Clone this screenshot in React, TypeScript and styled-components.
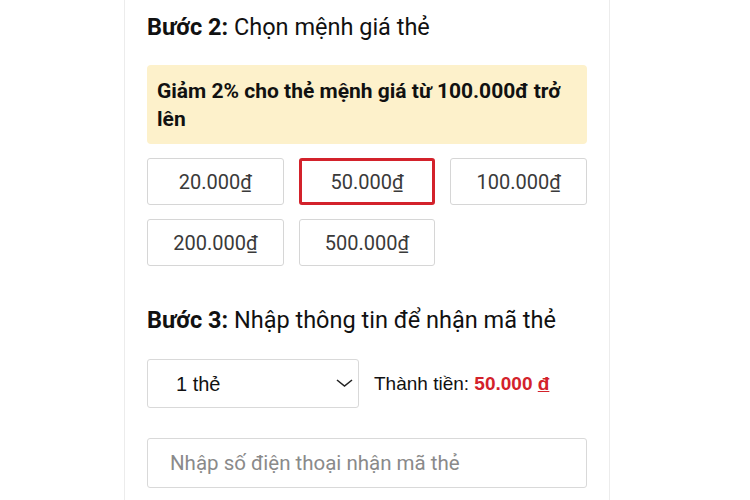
import { useState } from "react";
import styled, { createGlobalStyle } from "styled-components";

const GlobalStyle = createGlobalStyle`
  body {
    margin: 0;
    background: #fff;
    font-family: Roboto, "Liberation Sans", Arial, sans-serif;
    color: #111;
  }
`;

const Card = styled.div`
  width: 440px;
  margin-left: 124px;
  padding: 13px 22px 20px;
  border-left: 1px solid #ececec;
  border-right: 1px solid #ececec;
  min-height: 467px;
`;

const StepTitle = styled.h2<{ $top?: number }>`
  margin: ${(p) => p.$top ?? 0}px 0 0;
  font-size: 23.5px;
  line-height: 28px;
  font-weight: 400;
  color: #111;
  white-space: nowrap;
  b {
    font-weight: 700;
  }
`;

const Notice = styled.div`
  margin-top: 24px;
  padding: 12px 10px 11px;
  background: #fdf1cb;
  border-radius: 4px;
  font-size: 21px;
  line-height: 28px;
  font-weight: 700;
  color: #111;
`;

const Grid = styled.div`
  margin-top: 14px;
  display: grid;
  grid-template-columns: repeat(3, 1fr);
  gap: 14px 15px;
`;

const Price = styled.button<{ $active?: boolean }>`
  height: 47px;
  box-sizing: border-box;
  background: #fff;
  border: ${(p) => (p.$active ? "3px solid #d3222b" : "1px solid #d6d6d6")};
  border-radius: 3px;
  font-family: Roboto, "Liberation Sans", Arial, sans-serif;
  font-size: 20px;
  color: #3a3a3a;
  cursor: pointer;
  padding: 0;
  u {
    text-decoration: underline;
    text-underline-offset: 1px;
  }
`;

const Row = styled.div`
  margin-top: 25px;
  display: flex;
  align-items: center;
  gap: 15px;
`;

const SelectWrap = styled.div`
  position: relative;
  width: 212px;
  flex-shrink: 0;
`;

const Select = styled.select`
  width: 100%;
  height: 49px;
  appearance: none;
  -webkit-appearance: none;
  background: #fff;
  border: 1px solid #d9d9d9;
  border-radius: 3px;
  padding: 0 40px 0 28px;
  font-family: "Liberation Sans", Arial, sans-serif;
  font-size: 20px;
  color: #111;
  outline: none;
`;

const Chevron = styled.svg`
  position: absolute;
  right: 6px;
  top: 19px;
  pointer-events: none;
`;

const Total = styled.div`
  font-family: "Liberation Sans", Arial, sans-serif;
  font-size: 19px;
  color: #111;
  white-space: nowrap;
  span {
    color: #d3222b;
    font-weight: 700;
  }
`;

const PhoneInput = styled.input`
  display: block;
  margin-top: 30px;
  width: 100%;
  height: 50px;
  box-sizing: border-box;
  border: 1px solid #d9d9d9;
  border-radius: 3px;
  padding: 0 22px;
  font-family: Roboto, "Liberation Sans", Arial, sans-serif;
  font-size: 20.5px;
  color: #111;
  outline: none;
  &::placeholder {
    color: #8a8a8a;
  }
`;

const prices = ["20.000", "50.000", "100.000", "200.000", "500.000"];

export default function App() {
  const [selected, setSelected] = useState("50.000");
  const [qty, setQty] = useState("1");

  return (
    <>
      <GlobalStyle />
      <Card>
        <StepTitle>
          <b>Bước 2:</b> Chọn mệnh giá thẻ
        </StepTitle>
        <Notice>Giảm 2% cho thẻ mệnh giá từ 100.000đ trở lên</Notice>
        <Grid>
          {prices.map((p) => (
            <Price
              key={p}
              $active={p === selected}
              onClick={() => setSelected(p)}
            >
              {p}
              <u>₫</u>
            </Price>
          ))}
        </Grid>
        <StepTitle $top={40}>
          <b>Bước 3:</b> Nhập thông tin để nhận mã thẻ
        </StepTitle>
        <Row>
          <SelectWrap>
            <Select value={qty} onChange={(e) => setQty(e.target.value)}>
              <option value="1">1 thẻ</option>
              <option value="2">2 thẻ</option>
              <option value="3">3 thẻ</option>
            </Select>
            <Chevron width="17" height="10" viewBox="0 0 17 10">
              <path
                d="M1 2 L8.5 8 L16 2"
                fill="none"
                stroke="#222"
                strokeWidth="1.6"
              />
            </Chevron>
          </SelectWrap>
          <Total>
            Thành tiền: <span>50.000 <u>đ</u></span>
          </Total>
        </Row>
        <PhoneInput placeholder="Nhập số điện thoại nhận mã thẻ" />
      </Card>
    </>
  );
}
